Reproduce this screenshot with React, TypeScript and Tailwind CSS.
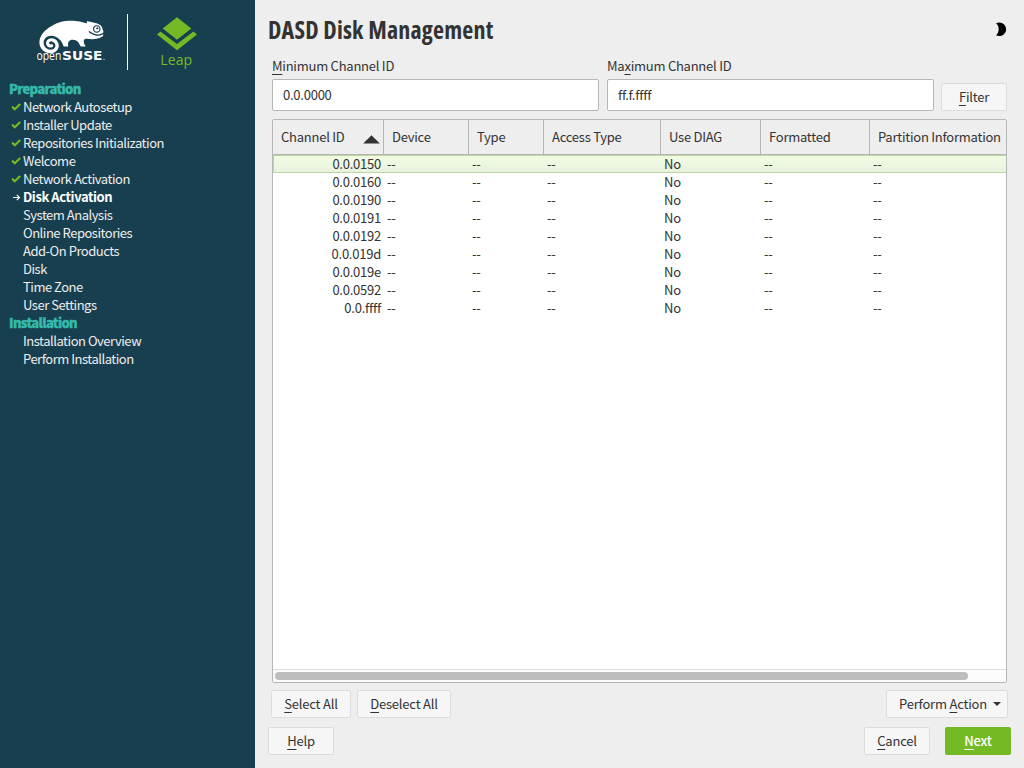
import type { ReactNode } from "react";
import { FaSuse } from "react-icons/fa";

type StepState = "done" | "current" | "todo";
type Step = { label: string; state: StepState };

const preparation: Step[] = [
  { label: "Network Autosetup", state: "done" },
  { label: "Installer Update", state: "done" },
  { label: "Repositories Initialization", state: "done" },
  { label: "Welcome", state: "done" },
  { label: "Network Activation", state: "done" },
  { label: "Disk Activation", state: "current" },
  { label: "System Analysis", state: "todo" },
  { label: "Online Repositories", state: "todo" },
  { label: "Add-On Products", state: "todo" },
  { label: "Disk", state: "todo" },
  { label: "Time Zone", state: "todo" },
  { label: "User Settings", state: "todo" },
];

const installation: Step[] = [
  { label: "Installation Overview", state: "todo" },
  { label: "Perform Installation", state: "todo" },
];

const columns = ["Channel ID", "Device", "Type", "Access Type", "Use DIAG", "Formatted", "Partition Information"];

const channels = ["0.0.0150", "0.0.0160", "0.0.0190", "0.0.0191", "0.0.0192", "0.0.019d", "0.0.019e", "0.0.0592", "0.0.ffff"];

const grid = "grid grid-cols-[111px_85px_75px_117px_100px_109px_136px]";

function StepIcon({ state }: { state: StepState }) {
  if (state === "done")
    return (
      <svg className="h-[18px] w-3 shrink-0" viewBox="0 0 12 18" fill="none">
        <path d="M1.1 8.6 3.8 11.2 9.2 6" stroke="#73ba25" strokeWidth="2.2" />
      </svg>
    );
  if (state === "current")
    return (
      <svg className="h-[18px] w-3 shrink-0" viewBox="0 0 12 18" fill="none">
        <path d="M2 9.5H8.4M5.8 6.8 8.5 9.5 5.8 12.2" stroke="#fff" strokeWidth="1.2" />
      </svg>
    );
  return <span className="w-3 shrink-0" />;
}

function StepGroup({ title, steps }: { title: string; steps: Step[] }) {
  return (
    <section>
      <h2 className="h-[18px] pl-[9px] font-black tracking-[-0.65px] text-[#35b9ab] [-webkit-text-stroke:0.4px_#35b9ab]">{title}</h2>
      <ul>
        {steps.map((s) => (
          <li key={s.label} className={s.state === "current" ? "flex h-[18px] pl-[11px] font-bold tracking-[-0.42px] text-white" : "flex h-[18px] pl-[11px] tracking-[-0.48px] text-[#eeeeee]"}>
            <StepIcon state={s.state} />
            <span>{s.label}</span>
          </li>
        ))}
      </ul>
    </section>
  );
}

function Key({ children }: { children: ReactNode }) {
  return <span className="underline decoration-1 underline-offset-[3px] [text-decoration-skip-ink:none]">{children}</span>;
}

function Button({ className, children }: { className: string; children: ReactNode }) {
  return (
    <button className={`flex h-7 items-center justify-center rounded-[2px] border border-[#dcdcdc] bg-[#f6f6f6] tracking-[-0.2px] ${className}`}>
      {children}
    </button>
  );
}

function Logos() {
  return (
    <header className="flex h-20">
      <div className="flex w-[127px] flex-col pt-[21px] pl-[37px]">
        <div className="relative h-12 w-20">
          <FaSuse className="absolute -top-[10px] left-[2px] h-[52px] w-[65px] text-white" />
          <svg className="absolute top-0 left-0 h-12 w-20" viewBox="0 0 80 48" fill="#fff">
            <text x="-0.5" y="39" fontFamily="Open Sans" fontSize="12" textLength="24.8" lengthAdjust="spacingAndGlyphs">open</text>
            <text x="25" y="39" fontFamily="DejaVu Sans" fontWeight="bold" fontSize="13" textLength="40.5" lengthAdjust="spacingAndGlyphs">SUSE</text>
            <circle cx="67" cy="38.3" r="0.6" />
          </svg>
        </div>
      </div>
      <div className="mt-[14px] h-14 w-px bg-white" />
      <svg className="h-20 w-[100px]" viewBox="128 0 100 80" fill="#73ba25">
        <path d="M177 17.2 191.3 28.5 177 39.8 162.7 28.5Z" />
        <path d="M157 34.4 160.5 31.6 177 43.9 193.5 31.6 197 34.4 177 50.2Z" />
        <text x="160.3" y="65" fontFamily="Open Sans" fontSize="14.4" textLength="32" lengthAdjust="spacingAndGlyphs">Leap</text>
      </svg>
    </header>
  );
}

function DiskTable() {
  return (
    <div className="flex h-[564px] w-[735px] flex-col overflow-hidden rounded-[2px] border border-[#b6b6b6] bg-white">
      <div className={`${grid} h-[35px] border-b border-[#b6b6b6] bg-[#eeeeee] leading-[34px]`}>
        {columns.map((c, i) => (
          <div key={c} className={i < 6 ? "flex border-r border-[#b6b6b6] pl-2 whitespace-nowrap" : "pl-2 whitespace-nowrap"}>
            {c}
            {i === 0 && (
              <svg className="mt-[15px] mr-[3px] ml-auto h-[9px] w-[17px]" viewBox="0 0 17 9" fill="#333">
                <path d="M8.5 0.3 16.8 8.6H0.2Z" />
              </svg>
            )}
          </div>
        ))}
      </div>
      {channels.map((id, r) => (
        <div
          key={id}
          className={
            r === 0
              ? `${grid} h-[18px] bg-linear-to-b from-[#f2fde4] to-[#e8f1de] shadow-[inset_1px_1px_0_0_#bcd6a0,inset_0_-1px_0_0_#bcd6a0]`
              : `${grid} h-[18px]`
          }
        >
          <span className="pr-[3px] text-right">{id}</span>
          <span className="pl-[3px]">--</span>
          <span className="pl-[3px]">--</span>
          <span className="pl-[3px]">--</span>
          <span className="pl-[3px]">No</span>
          <span className="pl-[3px]">--</span>
          <span className="pl-[3px]">--</span>
        </div>
      ))}
      <div className="mt-auto h-[13px] border-t border-[#dcdcdc] bg-[#fcfcfc] pt-[2px] pl-[2px]">
        <div className="h-2 w-[693px] rounded-full bg-[#bdbdbd]" />
      </div>
    </div>
  );
}

export default function App() {
  return (
    <div className="flex h-[768px] w-[1024px] overflow-hidden bg-[#eeeeee] font-['Noto_Sans_CJK_SC',sans-serif] text-[13px] leading-[18px] text-[#333333]">
      <aside className="w-[255px] shrink-0 bg-[#173f4f]">
        <Logos />
        <nav>
          <StepGroup title="Preparation" steps={preparation} />
          <StepGroup title="Installation" steps={installation} />
        </nav>
      </aside>
      <main className="flex flex-1 flex-col pr-[13px] pl-[13px] tracking-[-0.24px]">
        <div className="flex h-[57px] items-start justify-between">
          <h1 className="mt-[14px] font-['Open_Sans',sans-serif] text-2xl leading-8 font-bold tracking-[0.2px] [font-stretch:75%]">DASD Disk Management</h1>
          <svg className="mt-5 mr-[3px] h-5 w-5" viewBox="0 0 20 20">
            <path d="M8 3.2C13 0.8 18.1 4.2 18.1 9.2S13 17.6 8 15.2C11.6 12.6 11.6 5.8 8 3.2Z" fill="#000" />
          </svg>
        </div>
        <div className="flex pl-1">
          <label className="flex w-[335px] flex-col">
            <span className="h-[22px]"><Key>M</Key>inimum Channel ID</span>
            <span className="h-8 w-[327px] rounded-[2px] border border-[#b6b6b6] bg-white pl-[10px] leading-[30px]">0.0.0000</span>
          </label>
          <label className="flex w-[334px] flex-col">
            <span className="h-[22px]">Ma<Key>x</Key>imum Channel ID</span>
            <span className="h-8 w-[327px] rounded-[2px] border border-[#b6b6b6] bg-white pl-[10px] leading-[30px]">ff.f.ffff</span>
          </label>
          <Button className="mt-[26px] w-[66px]"><span><Key>F</Key>ilter</span></Button>
        </div>
        <div className="mt-2 pl-1">
          <DiskTable />
        </div>
        <div className="mt-[7px] flex pl-[3px]">
          <Button className="w-20"><span><Key>S</Key>elect All</span></Button>
          <Button className="ml-[6px] w-[94px]"><span><Key>D</Key>eselect All</span></Button>
          <Button className="mr-[3px] ml-auto w-[122px]">
            <span className="ml-[6px]">Perform <Key>A</Key>ction</span>
            <svg className="ml-[6px] h-1 w-2" viewBox="0 0 8 4" fill="#333"><path d="M0 0H8L4 4Z" /></svg>
          </Button>
        </div>
        <div className="mt-[9px] flex">
          <Button className="w-[66px]"><span><Key>H</Key>elp</span></Button>
          <Button className="mr-[15px] ml-auto w-[66px]"><span><Key>C</Key>ancel</span></Button>
          <button className="flex h-7 w-[66px] items-center justify-center rounded-[2px] bg-[#73ba25] font-medium text-white"><span><Key>N</Key>ext</span></button>
        </div>
      </main>
    </div>
  );
}
